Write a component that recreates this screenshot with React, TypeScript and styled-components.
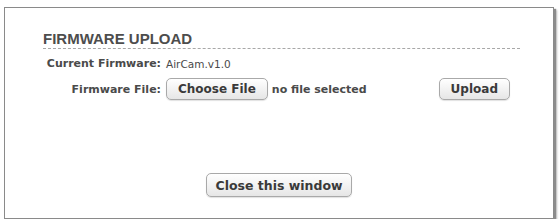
import { FC } from 'react';
import styled, { createGlobalStyle } from 'styled-components';

const GlobalStyle = createGlobalStyle`
  html, body {
    margin: 0;
    padding: 0;
    background: #ffffff;
  }
`;

const Page = styled.div`
  padding: 7px 0 0 4px;
  font-family: 'DejaVu Sans', 'Liberation Sans', sans-serif;
`;

const Window = styled.div`
  width: 548px;
  height: 210px;
  border: 1px solid #8a8a8a;
  background: #ffffff;
  box-shadow: 2px 2px 1px #8c8c8c, 3px 3px 2px rgba(0, 0, 0, 0.25);
  display: flex;
  flex-direction: column;
`;

const Section = styled.div`
  margin: 22px 33px 0 38px;
`;

const Title = styled.div`
  font-family: 'Liberation Sans', Arial, sans-serif;
  font-weight: bold;
  font-size: 15px;
  line-height: 17px;
  color: #4d4d4d;
  padding-bottom: 1px;
  border-bottom: 1px dashed #a8a8a8;
`;

const Rows = styled.div`
  display: grid;
  grid-template-columns: 118px 1fr;
  column-gap: 5px;
  row-gap: 8px;
  margin-top: 8px;
  align-items: center;
`;

const Label = styled.div`
  text-align: right;
  font-weight: bold;
  font-size: 11px;
  color: #4a4a4a;
  white-space: nowrap;
`;

const Value = styled.div<{ $small?: boolean }>`
  display: flex;
  align-items: center;
  padding-right: 10px;
  font-size: ${({ $small }) => ($small ? '10.5px' : '11px')};
  font-weight: ${({ $small }) => ($small ? 'normal' : 'bold')};
  color: #4a4a4a;
  white-space: nowrap;
`;

const FileInfo = styled.span`
  margin-left: 4px;
  flex: 1;
`;

const Button = styled.button<{ $big?: boolean }>`
  font-family: 'DejaVu Sans', sans-serif;
  font-weight: bold;
  font-size: ${({ $big }) => ($big ? '12.5px' : '12px')};
  color: #3a3a3a;
  height: ${({ $big }) => ($big ? '24px' : '22px')};
  padding: 0 ${({ $big }) => ($big ? '8px' : '11px')};
  border: 1px solid #a9a9a9;
  border-radius: 5px;
  background: linear-gradient(#ffffff, #f0f0f0 60%, #e6e6e6);
  box-shadow: 0 1px 1px rgba(0, 0, 0, 0.12);
  cursor: pointer;
`;

const Footer = styled.div`
  margin-top: auto;
  margin-bottom: 21px;
  display: flex;
  justify-content: center;
`;

const App: FC = () => (
  <>
    <GlobalStyle />
    <Page>
      <Window>
        <Section>
          <Title>FIRMWARE UPLOAD</Title>
          <Rows>
            <Label>Current Firmware:</Label>
            <Value $small>AirCam.v1.0</Value>
            <Label>Firmware File:</Label>
            <Value>
              <Button>Choose File</Button>
              <FileInfo>no file selected</FileInfo>
              <Button>Upload</Button>
            </Value>
          </Rows>
        </Section>
        <Footer>
          <Button $big>Close this window</Button>
        </Footer>
      </Window>
    </Page>
  </>
);

export default App;
